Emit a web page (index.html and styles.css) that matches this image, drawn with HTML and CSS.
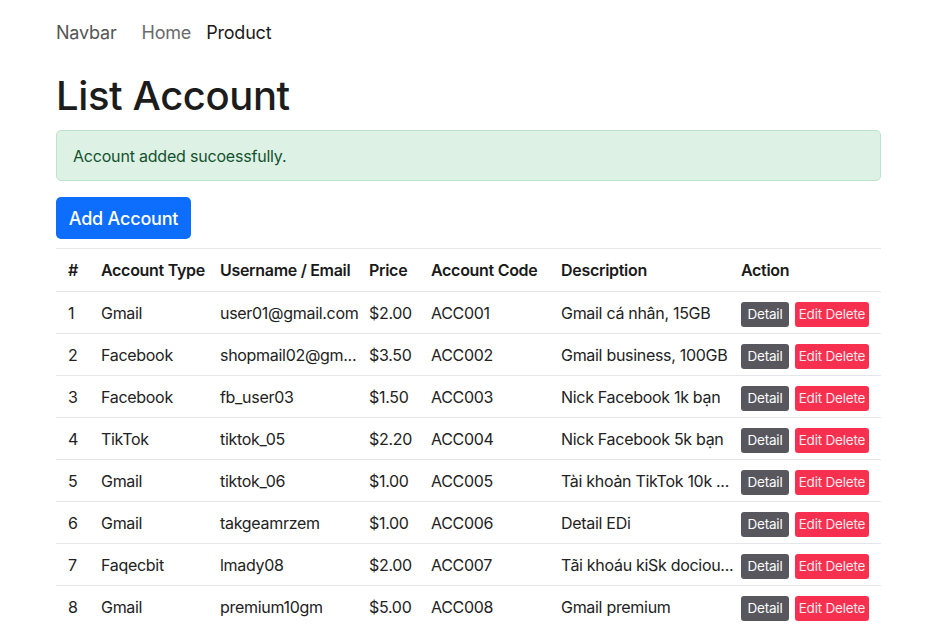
FILE: index.html
```html
<!DOCTYPE html>
<html lang="vi">
<head>
<meta charset="utf-8">
<title>List Account</title>
<link rel="stylesheet" href="styles.css">
</head>
<body>
<div class="container">
  <nav class="navbar">
    <span class="brand">Navbar</span>
    <span class="nav-link">Home</span>
    <span class="nav-link active">Product</span>
  </nav>
  <h1 class="title">List Account</h1>
  <div class="alert">Account added sucoessfully.</div>
  <button class="btn-add">Add Account</button>
  <table class="table">
    <colgroup>
      <col class="c1"><col class="c2"><col class="c3"><col class="c4"><col class="c5"><col class="c6"><col class="c7">
    </colgroup>
    <thead>
      <tr><th>#</th><th>Account Type</th><th>Username / Email</th><th>Price</th><th>Account Code</th><th>Description</th><th>Action</th></tr>
    </thead>
    <tbody>
      <tr><td>1</td><td>Gmail</td><td>user01@gmail.com</td><td>$2.00</td><td>ACC001</td><td>Gmail cá nhân, 15GB</td><td class="act"><span class="b-detail">Detail</span><span class="b-del">Edit Delete</span></td></tr>
      <tr><td>2</td><td>Facebook</td><td>shopmail02@gm...</td><td>$3.50</td><td>ACC002</td><td>Gmail business, 100GB</td><td class="act"><span class="b-detail">Detail</span><span class="b-del">Edit Delete</span></td></tr>
      <tr><td>3</td><td>Facebook</td><td>fb_user03</td><td>$1.50</td><td>ACC003</td><td>Nick Facebook 1k bạn</td><td class="act"><span class="b-detail">Detail</span><span class="b-del">Edit Delete</span></td></tr>
      <tr><td>4</td><td>TikTok</td><td>tiktok_05</td><td>$2.20</td><td>ACC004</td><td>Nick Facebook 5k bạn</td><td class="act"><span class="b-detail">Detail</span><span class="b-del">Edit Delete</span></td></tr>
      <tr><td>5</td><td>Gmail</td><td>tiktok_06</td><td>$1.00</td><td>ACC005</td><td>Tài khoản TikTok 10k ...</td><td class="act"><span class="b-detail">Detail</span><span class="b-del">Edit Delete</span></td></tr>
      <tr><td>6</td><td>Gmail</td><td>takgeamrzem</td><td>$1.00</td><td>ACC006</td><td>Detail EDi</td><td class="act"><span class="b-detail">Detail</span><span class="b-del">Edit Delete</span></td></tr>
      <tr><td>7</td><td>Faqecbit</td><td>lmady08</td><td>$2.00</td><td>ACC007</td><td>Tãi khoáu kiSk dociou...</td><td class="act"><span class="b-detail">Detail</span><span class="b-del">Edit Delete</span></td></tr>
      <tr><td>8</td><td>Gmail</td><td>premium10gm</td><td>$5.00</td><td>ACC008</td><td>Gmail premium</td><td class="act"><span class="b-detail">Detail</span><span class="b-del">Edit Delete</span></td></tr>
    </tbody>
  </table>
</div>
</body>
</html>
```
FILE: styles.css
```css
* { box-sizing: border-box; }
body {
  margin: 0;
  background: #fff;
  color: #212529;
  font-family: Inter, "Noto Sans", "Liberation Sans", sans-serif;
  font-size: 16px;
}
.container {
  width: 825px;
  margin-left: 56px;
}
.navbar {
  display: flex;
  align-items: center;
  height: 64px;
  font-size: 18px;
  letter-spacing: -0.2px;
}
.brand { color: #555; margin-right: 25px; }
.nav-link { color: #6a6a6a; margin-right: 15px; }
.nav-link.active { color: #1a1a1a; }
.title {
  margin: 8px 0 10px;
  font-size: 40px;
  font-weight: 500;
  line-height: 48px;
  color: #1c1c1c;
  letter-spacing: -0.4px;
}
.alert {
  height: 51px;
  background: #ddf1e5;
  border: 1px solid #bde4cb;
  border-radius: 5px;
  color: #14522f;
  padding: 0 16px;
  display: flex;
  align-items: center;
  font-size: 16px;
  letter-spacing: -0.2px;
}
.btn-add {
  display: block;
  margin-top: 16px;
  height: 42px;
  width: 135px;
  background: #0d6efd;
  color: #fff;
  border: none;
  border-radius: 5px;
  font-family: inherit;
  font-size: 18px;
  font-weight: 500;
  letter-spacing: -0.2px;
  padding: 0;
}
.table {
  margin-top: 9px;
  width: 825px;
  border-collapse: collapse;
  table-layout: fixed;
  border-top: 1px solid #e3e6ea;
}
.c1 { width: 33px; }
.c2 { width: 119px; }
.c3 { width: 149px; }
.c4 { width: 62px; }
.c5 { width: 130px; }
.c6 { width: 180px; }
.c7 { width: 152px; }
th, td {
  text-align: left;
  padding: 0 0 0 12px;
  white-space: nowrap;
  border-bottom: 1px solid #e3e6ea;
  letter-spacing: -0.3px;
}
th {
  height: 43px;
  font-weight: 600;
  font-size: 16px;
  color: #1a1a1a;
}
td {
  height: 42px;
  font-size: 16px;
  color: #222;
}
td.act { padding-top: 3px; }
.b-detail, .b-del {
  display: inline-block;
  height: 25px;
  line-height: 25px;
  font-size: 13.5px;
  letter-spacing: -0.2px;
  color: #fff;
  border-radius: 3px;
  vertical-align: middle;
  text-align: center;
}
.b-detail {
  width: 48px;
  background: #57575d;
  margin-right: 6px;
}
.b-del {
  width: 74px;
  background: #f8304f;
  color: #fde8ec;
}
```
